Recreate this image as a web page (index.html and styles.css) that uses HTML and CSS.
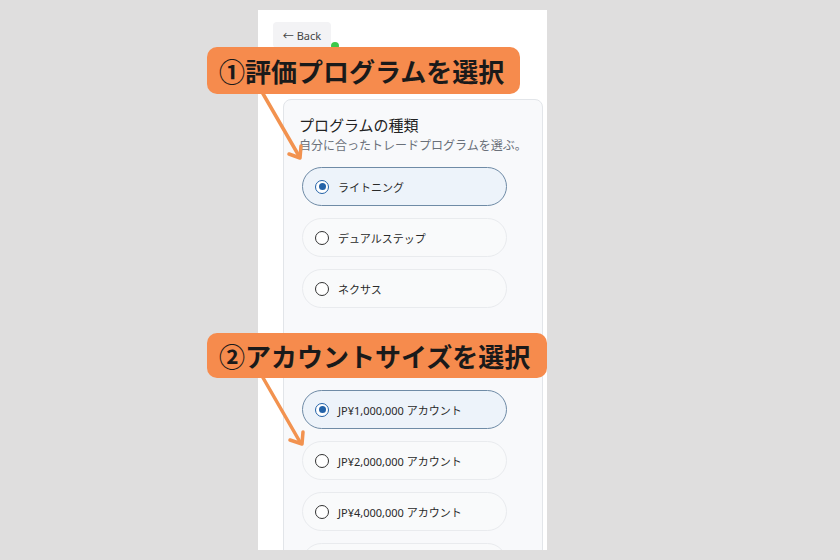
FILE: index.html
```html
<!DOCTYPE html>
<html lang="ja">
<head>
<meta charset="utf-8">
<link rel="stylesheet" href="styles.css">
</head>
<body>
<div class="phone">
  <button class="back">← Back</button>
  <span class="tap-dot"></span>
  <h1 class="title">アカウントを作成して開始</h1>
  <div class="card">
    <section class="group">
      <h2 class="group-title">プログラムの種類</h2>
      <p class="group-sub">自分に合ったトレードプログラムを選ぶ。</p>
      <div class="options">
        <div class="option selected"><span class="radio"></span><span>ライトニング</span></div>
        <div class="option"><span class="radio"></span><span>デュアルステップ</span></div>
        <div class="option"><span class="radio"></span><span>ネクサス</span></div>
      </div>
    </section>
    <section class="group second">
      <h2 class="group-title">アカウントサイズ</h2>
      <p class="group-sub">取引したい口座サイズを選ぶ。</p>
      <div class="options">
        <div class="option selected"><span class="radio"></span><span>JP¥1,000,000 アカウント</span></div>
        <div class="option"><span class="radio"></span><span>JP¥2,000,000 アカウント</span></div>
        <div class="option"><span class="radio"></span><span>JP¥4,000,000 アカウント</span></div>
        <div class="option"><span class="radio"></span><span>JP¥8,000,000 アカウント</span></div>
      </div>
    </section>
  </div>
</div>

<svg class="arrows" width="840" height="560" viewBox="0 0 840 560">
  <g fill="none" stroke="#f2924f" stroke-width="3.5" stroke-linecap="round" stroke-linejoin="round">
    <path d="M262 92 L299 156"/>
    <path d="M289 154 L300 158 L301 146"/>
    <path d="M262 376 L300 442"/>
    <path d="M290 440 L302 444 L303 432"/>
  </g>
</svg>

<div class="callout callout-1">①評価プログラムを選択</div>
<div class="callout callout-2">②アカウントサイズを選択</div>
</body>
</html>
```

FILE: styles.css
```css
html, body {
  margin: 0;
  padding: 0;
}
body {
  position: relative;
  width: 840px;
  height: 560px;
  overflow: hidden;
  background: #dfdede;
  font-family: "Noto Sans", "Noto Sans CJK JP", sans-serif;
  color: #222;
}
.phone {
  position: relative;
  box-sizing: border-box;
  width: 289px;
  height: 540px;
  margin: 10px 0 0 258px;
  padding: 12px 4px 0 15px;
  background: #ffffff;
  overflow: hidden;
}
.back {
  display: block;
  width: 58px;
  height: 26px;
  padding: 0;
  border: none;
  border-radius: 4px;
  background: #f3f3f5;
  color: #444;
  font-family: "Noto Sans", "Noto Sans CJK JP", sans-serif;
  font-size: 11px;
}
.tap-dot {
  position: absolute;
  left: 73px;
  top: 32px;
  width: 8px;
  height: 8px;
  border-radius: 50%;
  background: #3cc84a;
}
.title {
  margin: 0;
  height: 51px;
  font-size: 20px;
  line-height: 24px;
  font-weight: 700;
  white-space: nowrap;
  color: #111;
}
.card {
  box-sizing: border-box;
  width: 260px;
  margin-left: 10px;
  padding: 15px 15px;
  border: 1px solid #e2e5e9;
  border-radius: 8px;
  background: #f8f9fb;
}
.group.second {
  margin-top: 30px;
}
.group-title {
  margin: 0;
  font-size: 15px;
  line-height: 20px;
  font-weight: 400;
  color: #222;
}
.group-sub {
  margin: 2px 0 0;
  font-size: 12px;
  line-height: 18px;
  color: #6a7079;
  white-space: nowrap;
}
.options {
  display: flex;
  flex-direction: column;
  gap: 12px;
  margin: 12px 0 0 3px;
}
.option {
  box-sizing: border-box;
  display: flex;
  align-items: center;
  gap: 9px;
  width: 205px;
  height: 39px;
  padding-left: 12px;
  border: 1px solid #e9ebee;
  border-radius: 20px;
  background: #f9fafb;
  font-size: 11px;
  color: #2a2a2a;
  white-space: nowrap;
}
.option.selected {
  border-color: #6f8ba6;
  background: #edf3fa;
}
.radio {
  box-sizing: border-box;
  flex: none;
  width: 14px;
  height: 14px;
  border: 1.7px solid #333;
  border-radius: 50%;
  position: relative;
  background: #fff;
}
.option.selected .radio {
  border-color: #2362a8;
}
.option.selected .radio::after {
  content: "";
  position: absolute;
  left: 50%;
  top: 50%;
  width: 7px;
  height: 7px;
  margin: -3.5px 0 0 -3.5px;
  border-radius: 50%;
  background: #2362a8;
}
.arrows {
  position: absolute;
  left: 0;
  top: 0;
  pointer-events: none;
}
.callout {
  position: absolute;
  box-sizing: border-box;
  display: flex;
  align-items: center;
  padding: 0 12px;
  border-radius: 10px;
  background: #f68b4d;
  color: #1a1a1a;
  font-family: "Noto Sans CJK JP", sans-serif;
  font-weight: 700;
  font-size: 26px;
  white-space: nowrap;
}
.callout-1 {
  left: 207px;
  top: 47px;
  width: 313px;
  height: 47px;
}
.callout-2 {
  left: 207px;
  top: 333px;
  width: 340px;
  height: 45px;
}
```
